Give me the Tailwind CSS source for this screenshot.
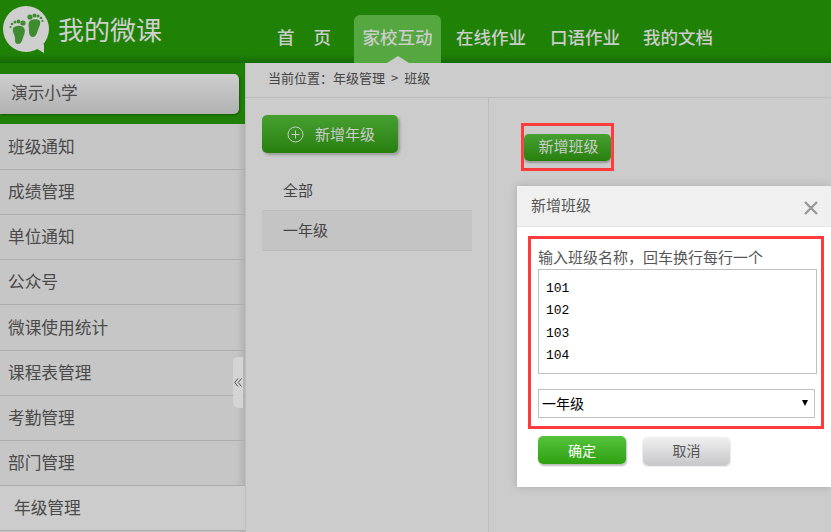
<!DOCTYPE html>
<html lang="zh-CN">
<head>
  <meta charset="UTF-8" />
  <title>我的微课</title>
  <script src="https://cdn.jsdelivr.net/npm/@tailwindcss/browser@4"></script>
</head>
<body class="w-[831px] h-[532px] overflow-hidden bg-[#cccccc] font-['Noto_Sans_CJK_SC','Liberation_Sans',sans-serif]">
  <div class="relative w-[831px] h-[532px] overflow-hidden">

    <!-- top bar -->
    <header class="h-[63px] flex bg-gradient-to-b from-[#1f8206] from-85% to-[#176a06] text-[#cccccc]">
      <div class="w-[277px] flex items-start">
        <svg class="w-[54px] h-[56px] ml-[1px] mt-[1px] shrink-0" viewBox="0 0 54 56">
          <circle cx="25" cy="28" r="23" fill="#cfcfcf" />
          <path d="M33 46 L43 43 L43 52 Z" fill="#cfcfcf" />
          <g fill="#3f8c30">
            <path d="M12 27c3-3 9-3 11 0 2 3 0 7-1 10-1 3-2 6-5 6-3 0-3-3-3-6 0-3-3-6-2-10z" />
            <path d="M28 21c1-3 9-4 11-1 1 3-1 6-2 9-1 3-2 7-5 7-3 0-4-3-4-6 0-3-1-6 0-9z" />
            <circle cx="22" cy="22" r="2.6" /><circle cx="17.5" cy="20.5" r="1.9" /><circle cx="14" cy="21" r="1.5" />
            <circle cx="11" cy="23" r="1.3" /><circle cx="9.5" cy="26" r="1.1" />
            <circle cx="29" cy="16" r="2.6" /><circle cx="33.5" cy="14.5" r="1.9" /><circle cx="37" cy="15" r="1.6" />
            <circle cx="40" cy="17" r="1.3" /><circle cx="41.5" cy="20" r="1.1" />
          </g>
        </svg>
        <span class="text-[26px] leading-none ml-[3px] mt-[16px] text-[#d0d0d0]">我的微课</span>
      </div>
      <nav class="flex text-[17.5px] leading-none font-medium">
        <a class="w-[54px] mt-[28px] mr-[23px] flex justify-between"><span>首</span><span>页</span></a>
        <a class="relative w-[87px] mt-[15px] rounded-t-[6px] bg-[#55a83f] flex justify-center pt-[13px]">家校互动
          <span class="absolute bottom-0 left-1/2 -translate-x-1/2 w-0 h-0 border-x-[11px] border-x-transparent border-b-[7px] border-b-[#cccccc]"></span>
        </a>
        <a class="ml-[15px] mt-[28px]">在线作业</a>
        <a class="ml-[24px] mt-[28px]">口语作业</a>
        <a class="ml-[23px] mt-[28px]">我的文档</a>
      </nav>
    </header>

    <div class="flex h-[469px]">
      <!-- sidebar -->
      <aside class="w-[246px] shrink-0 border-r-[1px] border-[#bdbdbd] bg-[#c6c6c6] text-[16.7px] text-[#4a4a4a] shadow-[inset_-9px_0_7px_-6px_#aeaeae]">
        <div class="h-[61px] bg-[#1f7f06] pt-[11px]">
          <div class="h-[40px] w-[239px] rounded-r-[5px] bg-gradient-to-b from-[#cfcfcf] to-[#b1b1b1] shadow-[1px_1px_2px_#145a05] pl-[11px] pb-[3px] flex items-center">演示小学</div>
        </div>
        <ul>
          <li class="h-[46px] pl-[8px] flex items-center border-b-[1px] border-[#adadad]">班级通知</li>
          <li class="h-[45px] pl-[8px] flex items-center border-b-[1px] border-[#adadad]">成绩管理</li>
          <li class="h-[45px] pl-[8px] flex items-center border-b-[1px] border-[#adadad]">单位通知</li>
          <li class="h-[45px] pl-[8px] flex items-center border-b-[1px] border-[#adadad]">公众号</li>
          <li class="h-[46px] pl-[8px] pt-[1px] flex items-center border-b-[1px] border-[#adadad]">微课使用统计</li>
          <li class="h-[45px] pl-[8px] flex items-center border-b-[1px] border-[#adadad]">课程表管理</li>
          <li class="h-[45px] pl-[8px] flex items-center border-b-[1px] border-[#adadad]">考勤管理</li>
          <li class="h-[45px] pl-[8px] flex items-center border-b-[1px] border-[#adadad]">部门管理</li>
          <li class="h-[45px] pl-[14px] flex items-center border-b-[1px] border-[#adadad] bg-[#cccccc]">年级管理</li>
        </ul>
      </aside>

      <main class="flex-1 flex flex-col">
        <div class="h-[35px] pl-[22px] pb-[4px] flex items-center border-b-[1px] border-[#bcbcbc] text-[13px] text-[#444444]">当前位置：年级管理 <span class="mx-[6px]">&gt;</span> 班级</div>
        <div class="flex-1 flex">
          <!-- grades -->
          <div class="w-[243px] border-r-[1px] border-[#bcbcbc] pl-[16px] pt-[17px]">
            <button class="w-[136px] h-[38px] pl-[2px] rounded-[5px] bg-gradient-to-b from-[#46a02f] to-[#27800d] shadow-[2px_2px_3px_#999999] text-[15px] text-[#cccccc] flex items-center justify-center gap-[11px]">
              <svg class="w-[17px] h-[17px]" viewBox="0 0 17 17" fill="none" stroke="#cccccc" stroke-width="1"><circle cx="8.5" cy="8.5" r="7.5" /><path d="M8.5 4.5v8M4.5 8.5h8" /></svg>
              新增年级
            </button>
            <ul class="w-[210px] mt-[17px] text-[15px] text-[#444444]">
              <li class="h-[40px] pl-[21px] flex items-center">全部</li>
              <li class="h-[41px] pl-[21px] flex items-center bg-[#c4c4c4] border-y-[1px] border-[#bdbdbd]">一年级</li>
            </ul>
          </div>
          <!-- classes -->
          <div class="flex-1 pl-[32px] pt-[25px]">
            <div class="w-[93px] h-[48px] border-[3px] border-[#ff3b3b] flex items-center">
              <button class="w-[87px] h-[27px] pl-[2px] pb-[1px] rounded-[5px] bg-gradient-to-b from-[#46a02f] to-[#27800d] shadow-[0_2px_2px_#999999] text-[15px] text-[#cccccc]">新增班级</button>
            </div>
          </div>
        </div>
      </main>
    </div>

    <!-- collapse handle -->
    <div class="absolute left-[233px] top-[357px] w-[10px] h-[51px] bg-[#d4d4d4] rounded-l-[5px] flex items-center justify-center">
      <svg class="w-[8px] h-[9px]" viewBox="0 0 8 9" fill="none" stroke="#555555" stroke-width="1"><path d="M4 .5L.7 4.5 4 8.5M7.5 .5L4.2 4.5 7.5 8.5" /></svg>
    </div>

    <!-- dialog -->
    <div class="absolute left-[517px] top-[186px] w-[314px] h-[301px] bg-white shadow-[0_0_8px_#aaaaaa]">
      <div class="h-[41px] bg-[#f0f0f0] border-b-[1px] border-[#e4e4e4] pl-[14px] pr-[13px] pb-[2px] flex items-center justify-between text-[15px] text-[#555555]">
        新增班级
        <svg class="w-[14px] h-[14px] mt-[6px]" viewBox="0 0 14 14" stroke="#999999" stroke-width="2.4"><path d="M1 1l12 12M13 1L1 13" /></svg>
      </div>
      <div class="w-[296px] h-[193px] ml-[11px] mt-[9px] border-[3px] border-[#ff3b3b] pl-[7px] pt-[8px]">
        <p class="text-[15px] leading-[20px] text-[#555555]">输入班级名称，回车换行每行一个</p>
        <textarea class="block w-[279px] h-[105px] mt-[2px] border-[1px] border-[#c0c0c0] px-[7px] pt-[8px] resize-none text-[13px] leading-[22.4px] text-black font-['Liberation_Mono',monospace] overflow-hidden">101
102
103
104</textarea>
        <div class="relative w-[277px] mt-[15px]">
          <select class="block w-full h-[29px] border-[1px] border-[#c0c0c0] pl-[3px] bg-white text-[14px] text-black appearance-none"><option>一年级</option></select>
          <svg class="absolute right-[7px] top-[11px] w-[6px] h-[6px]" viewBox="0 0 6 6" fill="#000000"><path d="M0 0h6L3 6z" /></svg>
        </div>
      </div>
      <div class="flex pl-[21px] mt-[7px] gap-[17px] text-[14px]">
        <button class="w-[88px] h-[28px] rounded-[5px] bg-gradient-to-b from-[#55c43c] to-[#2ea00c] shadow-[1px_2px_2px_#bbbbbb] text-white">确定</button>
        <button class="w-[87px] h-[28px] mt-[1px] pb-[2px] rounded-[5px] bg-gradient-to-b from-[#f0f0f0] to-[#c8c8cc] shadow-[0_1px_2px_#bbbbbb] text-[#555555]">取消</button>
      </div>
    </div>
  </div>
</body>
</html>
